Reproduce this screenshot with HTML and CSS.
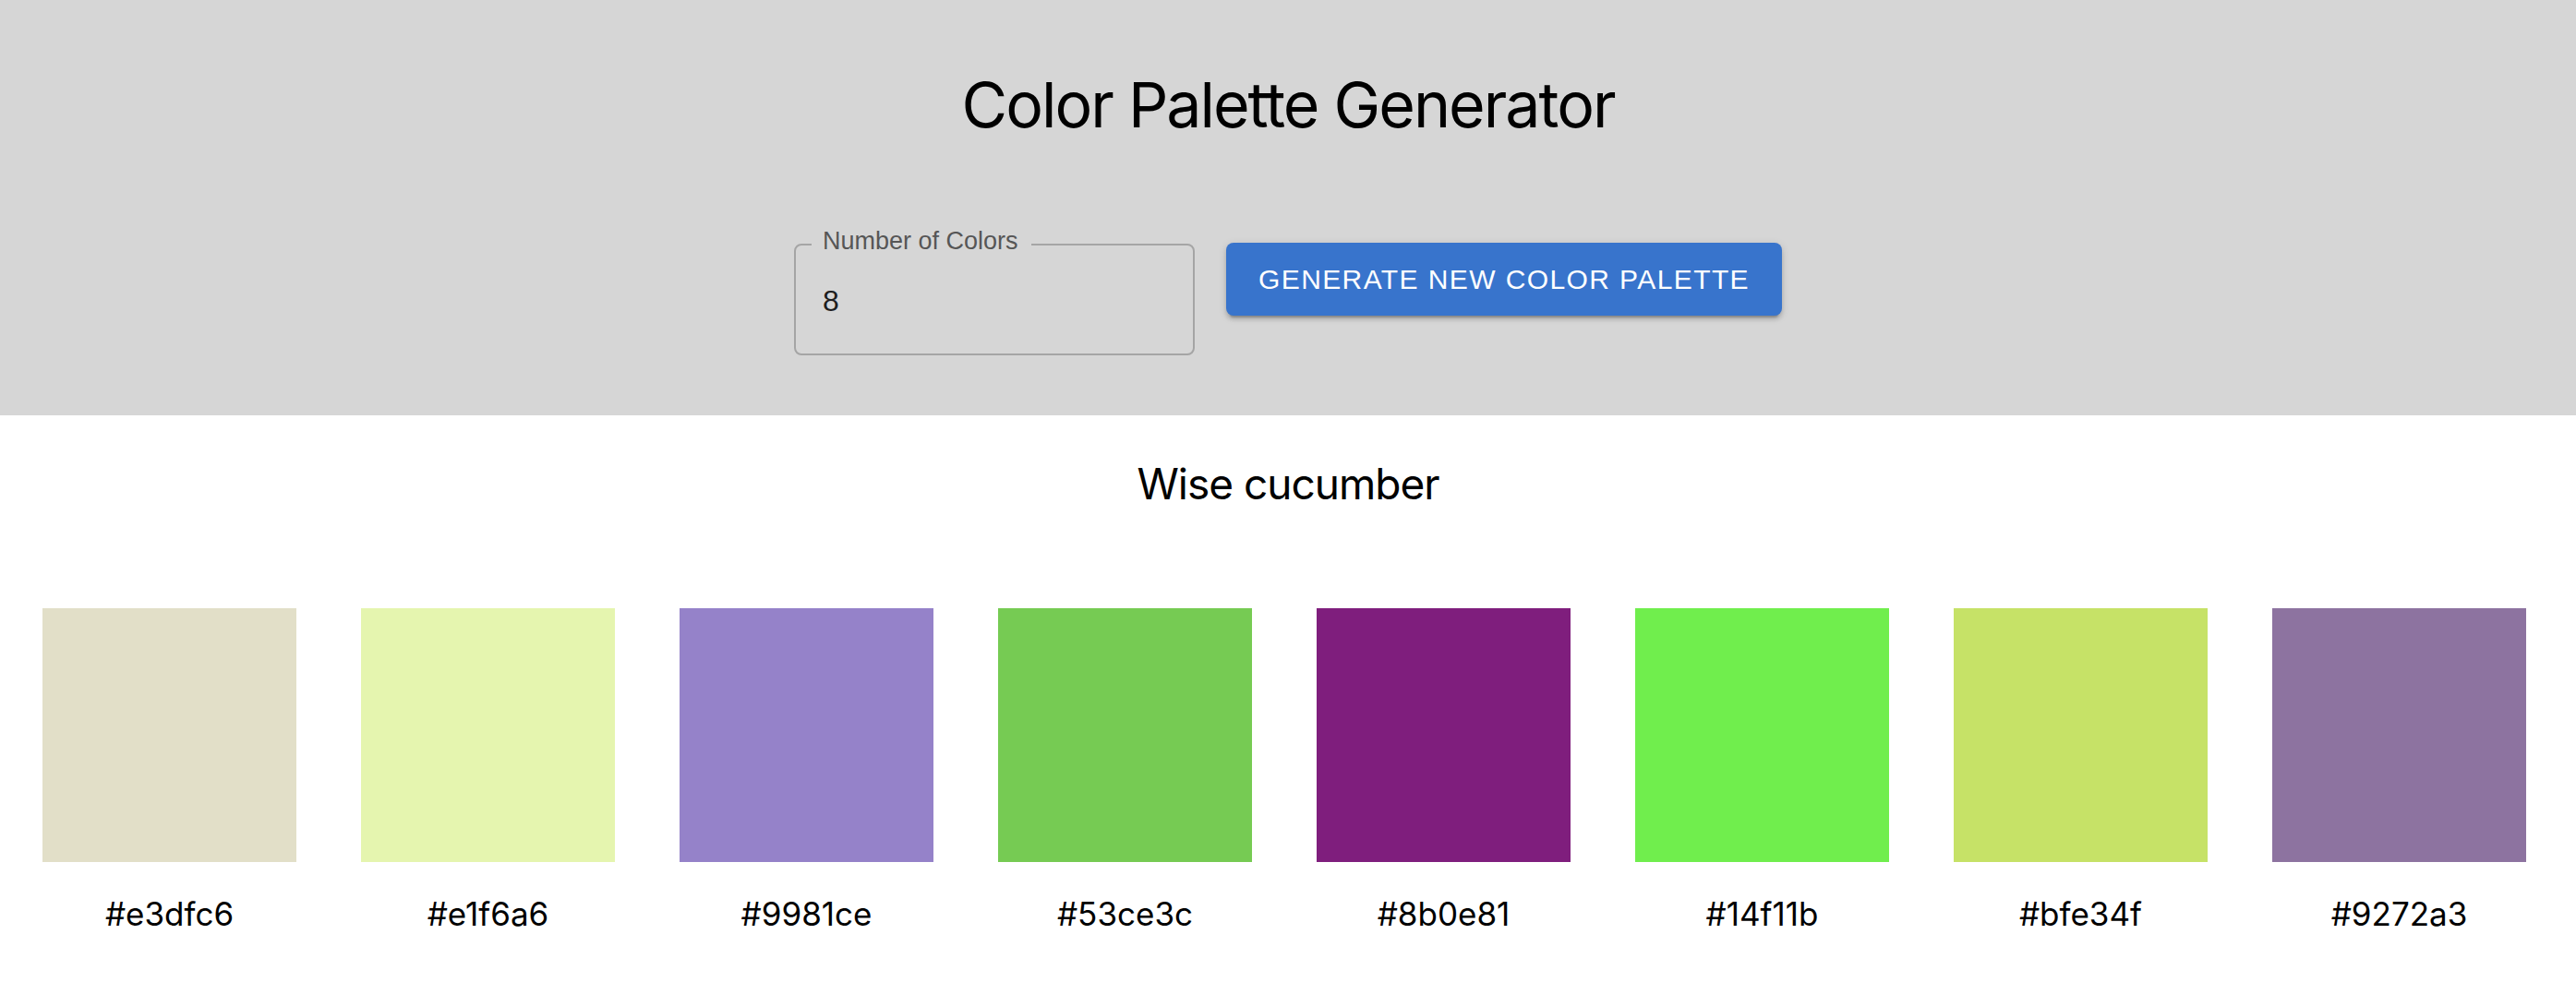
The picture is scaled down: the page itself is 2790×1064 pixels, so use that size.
FILE: index.html
```html
<!DOCTYPE html>
<html lang="en">
<head>
<meta charset="utf-8">
<title>Color Palette Generator</title>
<link rel="stylesheet" href="styles.css">
</head>
<body>
<header class="top">
  <h1 class="title">Color Palette Generator</h1>
  <div class="controls">
    <div class="field">
      <span class="field-label">Number of Colors</span>
      <span class="field-value">8</span>
    </div>
    <button class="btn" type="button">Generate New Color Palette</button>
  </div>
</header>
<main class="content">
  <h2 class="palette-name">Wise cucumber</h2>
  <div class="swatches">
    <div class="swatch"><div class="chip" style="background:#e2dfc8"></div><div class="hex">#e3dfc6</div></div>
    <div class="swatch"><div class="chip" style="background:#e5f5af"></div><div class="hex">#e1f6a6</div></div>
    <div class="swatch"><div class="chip" style="background:#9582c9"></div><div class="hex">#9981ce</div></div>
    <div class="swatch"><div class="chip" style="background:#76cb53"></div><div class="hex">#53ce3c</div></div>
    <div class="swatch"><div class="chip" style="background:#7f1e7d"></div><div class="hex">#8b0e81</div></div>
    <div class="swatch"><div class="chip" style="background:#70ee4d"></div><div class="hex">#14f11b</div></div>
    <div class="swatch"><div class="chip" style="background:#c6e267"></div><div class="hex">#bfe34f</div></div>
    <div class="swatch"><div class="chip" style="background:#8d73a0"></div><div class="hex">#9272a3</div></div>
  </div>
</main>
</body>
</html>
```
FILE: styles.css
```css
* { box-sizing: border-box; }
html, body { margin: 0; padding: 0; background: #ffffff; }
body { font-family: Inter, "Noto Sans", sans-serif; color: #000; }

.top {
  background: #d6d6d6;
  padding: 78px 0 65px;
}
.title {
  margin: 0;
  text-align: center;
  font-size: 68px;
  line-height: 70px;
  letter-spacing: -2px;
  font-weight: 400;
}
.controls {
  margin-top: 115px;
  display: flex;
  justify-content: center;
  align-items: flex-start;
  gap: 34px;
}
.field {
  position: relative;
  margin-top: 1px;
  width: 434px;
  height: 121px;
  border: 2px solid #a5a5a5;
  border-radius: 8px;
  display: flex;
  align-items: center;
  padding-left: 29px;
  font-family: "Liberation Sans", Arial, sans-serif;
}
.field-label {
  position: absolute;
  top: -18px;
  left: 17px;
  padding: 0 14px 0 12px;
  background: #d6d6d6;
  font-size: 27px;
  line-height: 27px;
  color: #565656;
}
.field-value {
  font-size: 32px;
  line-height: 32px;
  color: #1e1e1e;
  padding-top: 2px;
}
.btn {
  height: 79px;
  padding: 0 35px;
  border: 0;
  border-radius: 8px;
  background: #3874cc;
  color: #ffffff;
  font-family: "Liberation Sans", Arial, sans-serif;
  font-size: 30px;
  letter-spacing: 1.4px;
  text-transform: uppercase;
  box-shadow: 0 6px 2px -4px rgba(0,0,0,0.2), 0 4px 4px 0 rgba(0,0,0,0.14), 0 2px 10px 0 rgba(0,0,0,0.12);
  cursor: pointer;
}

.content { padding-bottom: 40px; }
.palette-name {
  margin: 51px 0 0;
  text-align: center;
  font-size: 46px;
  line-height: 47px;
  letter-spacing: -1px;
  font-weight: 400;
}
.swatches {
  margin-top: 111px;
  display: flex;
  justify-content: center;
  gap: 70px;
  padding-right: 8px;
}
.swatch {
  width: 275px;
  display: flex;
  flex-direction: column;
  align-items: center;
}
.chip { width: 275px; height: 275px; }
.hex {
  margin-top: 39px;
  font-size: 35px;
  line-height: 35px;
}
```
